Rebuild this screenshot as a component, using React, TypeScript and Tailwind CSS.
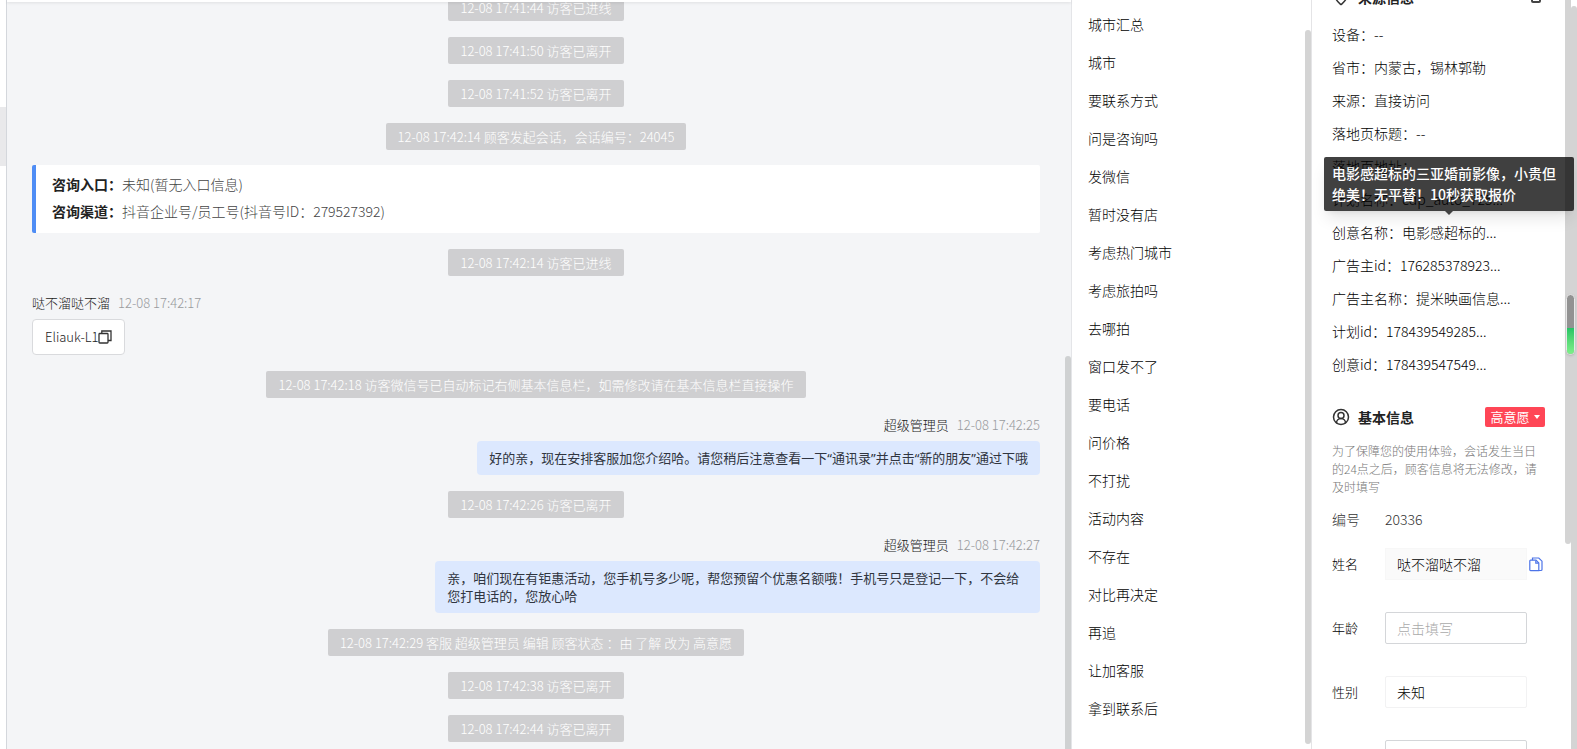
import React from 'react';
import { CircleUserRound, MapPin } from 'lucide-react';

type ChatItem =
  | { kind: 'notice'; text: string }
  | { kind: 'entry'; rows: { label: string; value: string }[] }
  | { kind: 'visitor'; name: string; time: string; text: string }
  | { kind: 'agent'; name: string; time: string; text: string };

const chat: ChatItem[] = [
  { kind: 'notice', text: '12-08 17:41:44 访客已进线' },
  { kind: 'notice', text: '12-08 17:41:50 访客已离开' },
  { kind: 'notice', text: '12-08 17:41:52 访客已离开' },
  { kind: 'notice', text: '12-08 17:42:14 顾客发起会话，会话编号：24045' },
  {
    kind: 'entry',
    rows: [
      { label: '咨询入口：', value: '未知(暂无入口信息)' },
      { label: '咨询渠道：', value: '抖音企业号/员工号(抖音号ID：279527392)' },
    ],
  },
  { kind: 'notice', text: '12-08 17:42:14 访客已进线' },
  { kind: 'visitor', name: '哒不溜哒不溜', time: '12-08 17:42:17', text: 'Eliauk-L1' },
  { kind: 'notice', text: '12-08 17:42:18 访客微信号已自动标记右侧基本信息栏，如需修改请在基本信息栏直接操作' },
  {
    kind: 'agent',
    name: '超级管理员',
    time: '12-08 17:42:25',
    text: '好的亲，现在安排客服加您介绍哈。请您稍后注意查看一下“通讯录”并点击“新的朋友”通过下哦',
  },
  { kind: 'notice', text: '12-08 17:42:26 访客已离开' },
  {
    kind: 'agent',
    name: '超级管理员',
    time: '12-08 17:42:27',
    text: '亲，咱们现在有钜惠活动，您手机号多少呢，帮您预留个优惠名额哦！手机号只是登记一下，不会给您打电话的，您放心哈',
  },
  { kind: 'notice', text: '12-08 17:42:29 客服 超级管理员 编辑 顾客状态 ：由 了解 改为 高意愿' },
  { kind: 'notice', text: '12-08 17:42:38 访客已离开' },
  { kind: 'notice', text: '12-08 17:42:44 访客已离开' },
];

const quickReplies = [
  '城市汇总', '城市', '要联系方式', '问是咨询吗', '发微信', '暂时没有店', '考虑热门城市',
  '考虑旅拍吗', '去哪拍', '窗口发不了', '要电话', '问价格', '不打扰', '活动内容',
  '不存在', '对比再决定', '再追', '让加客服', '拿到联系后',
];

const source = [
  ['设备', '--'],
  ['省市', '内蒙古，锡林郭勒'],
  ['来源', '直接访问'],
  ['落地页标题', '--'],
  ['落地页地址', ''],
  ['计划名称', 'cdp_auto_725...'],
  ['创意名称', '电影感超标的...'],
  ['广告主id', '176285378923...'],
  ['广告主名称', '提米映画信息...'],
  ['计划id', '178439549285...'],
  ['创意id', '178439547549...'],
];

const CopyIcon = () => (
  <svg viewBox="0 0 14 14" className="h-[14px] w-[14px]" fill="none" stroke="#333" strokeWidth="1.3">
    <rect x="1" y="3.5" width="9" height="9.5" rx="0.8" />
    <path d="M3.8 3.5V1h9.2v9.5h-3" />
  </svg>
);

const CopyFileIcon = () => (
  <svg viewBox="0 0 14 15" className="h-[15px] w-[14px]" fill="none" stroke="#4d74e8" strokeWidth="1.2">
    <path d="M3.5 3.2V1h6.3L13 4.2v8.3a1 1 0 0 1-1 1H9.5" />
    <path d="M1.6 3.2H7l2.8 2.8v7.6H1.6a.8.8 0 0 1-.8-.8V4a.8.8 0 0 1 .8-.8z" />
    <path d="M6.8 3.4v2.8h2.8" />
  </svg>
);

const ChatRow: React.FC<{ item: ChatItem }> = ({ item }) => {
  if (item.kind === 'notice') {
    return (
      <div className="mt-4 flex shrink-0 justify-center">
        <span className="rounded-xs bg-[#cfcfd1] px-3 text-[13px] leading-[27px] text-white">{item.text}</span>
      </div>
    );
  }

  if (item.kind === 'entry') {
    return (
      <div className="mt-[15px] shrink-0 rounded-xs border-l-4 border-[#4f8df5] bg-white px-4 pt-[6px] pb-2 text-sm leading-[27px]">
        {item.rows.map((row) => (
          <div key={row.label}>
            <span className="font-bold text-[#222]">{row.label}</span>
            <span className="text-[#444]">{row.value}</span>
          </div>
        ))}
      </div>
    );
  }

  const isAgent = item.kind === 'agent';
  return (
    <div className={isAgent ? 'mt-4 flex shrink-0 flex-col items-end' : 'mt-4 flex shrink-0 flex-col items-start'}>
      <div className="mb-[5px] flex gap-2 text-[13px] leading-[22px]">
        <span className="text-[#222]">{item.name}</span>
        <span className="text-[#999b9e]">{item.time}</span>
      </div>
      {isAgent ? (
        <div className="max-w-[60%] rounded bg-[#dce8fe] px-3 py-2 font-['Noto_Sans','Noto_Sans_CJK_SC',sans-serif] text-[13px] leading-[18px] font-normal text-[#303540]">
          {item.text}
        </div>
      ) : (
        <div className="flex items-center rounded border border-[#d9dadd] bg-white px-3 py-2 text-[13px] leading-[18px] text-[#222]">
          {item.text}
          <button type="button" aria-label="复制">
            <CopyIcon />
          </button>
        </div>
      )}
    </div>
  );
};

const Tooltip = () => (
  <div
    role="tooltip"
    className="absolute top-[157px] -right-[9px] w-[250px] rounded-xs bg-black/75 px-2 py-[6px] text-sm leading-[21px] font-medium text-white shadow-lg"
  >
    电影感超标的三亚婚前影像，小贵但绝美！无平替！10秒获取报价
    <span className="absolute top-full left-1/2 -ml-1 border-x-4 border-t-4 border-x-transparent border-t-[#404040]" />
  </div>
);

const fieldClass = 'h-8 w-[142px] border px-[11px] text-sm text-black outline-none placeholder:text-[#aaa]';

export default function App() {
  return (
    <div className="flex h-screen overflow-hidden bg-white font-['Noto_Sans_CJK_SC',sans-serif] text-sm font-light text-black">
      {/* edge of the conversation list */}
      <div className="w-[7px] shrink-0 border-r border-[#d4d7dc] pt-[107px]">
        <div className="h-[59px] bg-[#e9e9eb]" />
      </div>

      <main className="relative flex min-w-0 flex-1 flex-col border-r border-[#e4e5e8] bg-[#f4f5f7]">
        <div className="z-10 h-[2px] shrink-0 bg-white shadow-sm" />
        <div className="flex min-h-0 flex-1 flex-col justify-end overflow-hidden pr-[31px] pb-[7px] pl-[25px]">
          {chat.map((item, i) => (
            <ChatRow key={i} item={item} />
          ))}
        </div>
        <div className="absolute top-[356px] right-0 bottom-0 w-[6px] rounded-t-full bg-[#cfd1d2]" />
      </main>

      <section className="relative w-[240px] shrink-0 overflow-hidden border-r border-[#e4e4e6] pt-[5px]">
        <ul>
          {quickReplies.map((text) => (
            <li key={text} className="px-4 leading-[38px]">{text}</li>
          ))}
        </ul>
        <div className="absolute top-[30px] right-0 bottom-[5px] w-[6px] rounded-full bg-[#d4d4d4]" />
      </section>

      <aside className="relative z-10 w-[253px] shrink-0">
        <div className="h-full overflow-hidden px-5">
          <div className="-mt-[19px] mb-[5px] flex h-8 items-center">
            <MapPin className="h-[18px] w-[18px] text-[#333]" strokeWidth={2} />
            <h2 className="ml-2 flex-1 font-bold text-[#222]">来源信息</h2>
            <button type="button" aria-label="编辑" className="mr-1 h-3 w-[10px] rounded-xs border-2 border-[#444]" />
          </div>
          {source.map(([label, value]) => (
            <div key={label} className="leading-[33px]">{label}：{value}</div>
          ))}

          <div className="mt-5 flex h-8 items-center">
            <CircleUserRound className="h-[18px] w-[18px] text-[#333]" strokeWidth={2} />
            <h2 className="ml-2 flex-1 font-bold text-[#222]">基本信息</h2>
            <button type="button" className="flex h-5 w-[60px] items-center justify-center gap-1 rounded-xs bg-[#ff4656] text-[13px] font-normal text-white">
              高意愿
              <span className="border-x-[3px] border-t-4 border-x-transparent border-t-white" />
            </button>
          </div>
          <p className="mt-[9px] text-xs leading-[18px] text-[#777]">
            为了保障您的使用体验，会话发生当日的24点之后，顾客信息将无法修改，请及时填写
          </p>
          <div className="mt-3 flex leading-[22px] text-[#333]">
            <span className="w-[53px]">编号</span>
            <span>20336</span>
          </div>

          <div className="mt-[18px] flex flex-col gap-8">
            <div className="flex items-center">
              <label htmlFor="name" className="w-[53px] shrink-0 text-[13px]">姓名</label>
              <input id="name" defaultValue="哒不溜哒不溜" className={`${fieldClass} border-[#f7f7f7] bg-[#fafafa]`} />
              <button type="button" aria-label="复制姓名" className="ml-[2px] shrink-0">
                <CopyFileIcon />
              </button>
            </div>
            <div className="flex items-center">
              <label htmlFor="age" className="w-[53px] shrink-0 text-[13px]">年龄</label>
              <input id="age" placeholder="点击填写" className={`${fieldClass} rounded-xs border-[#d4d6d9]`} />
            </div>
            <div className="flex items-center">
              <label htmlFor="gender" className="w-[53px] shrink-0 text-[13px]">性别</label>
              <select id="gender" className={`${fieldClass} appearance-none rounded-xs border-[#f2f2f3] bg-white`}>
                <option>未知</option>
              </select>
            </div>
            <div className="flex items-center pl-[53px]">
              <input aria-label="电话" className={`${fieldClass} rounded-xs border-[#d4d6d9]`} />
            </div>
          </div>
        </div>
        <Tooltip />
      </aside>

      {/* inner and outer scroll bars, with the floating meter on top */}
      <div className="relative flex w-3 shrink-0">
        <div className="h-[544px] w-[6px] rounded-b-full bg-[#d4d4d4]" />
        <div className="mt-[6px] w-[6px] rounded-t-full bg-[#d4d4d4]" />
        <div className="absolute top-[294px] left-px h-[61px] w-[9px] overflow-hidden rounded-full border border-[#e8e8e8] bg-[#929292] shadow">
          <div className="mt-[33px] h-[26px] bg-linear-to-b from-[#22c465] to-[#7df08a]" />
        </div>
      </div>
    </div>
  );
}
